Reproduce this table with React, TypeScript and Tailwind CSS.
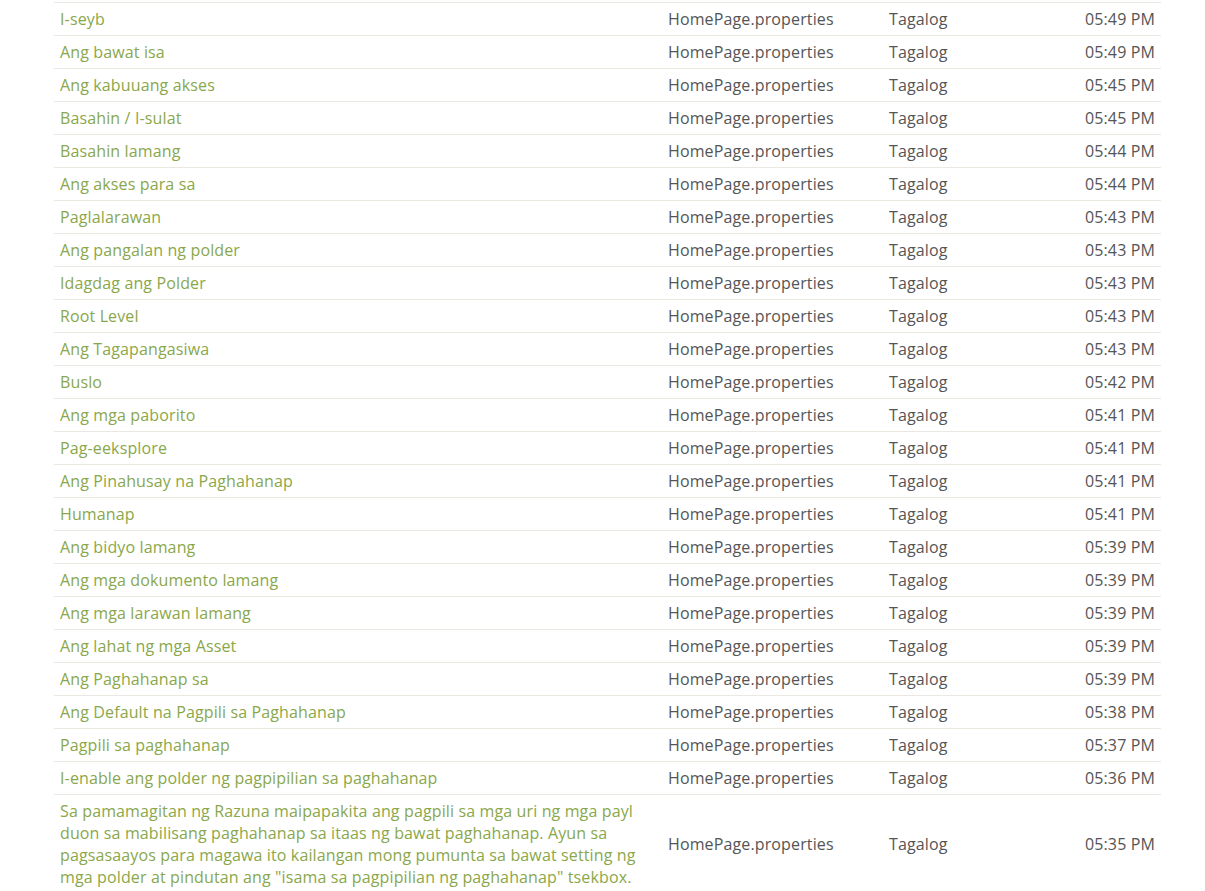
const rows: [string, string][] = [
  ["I-seyb", "05:49 PM"],
  ["Ang bawat isa", "05:49 PM"],
  ["Ang kabuuang akses", "05:45 PM"],
  ["Basahin / I-sulat", "05:45 PM"],
  ["Basahin lamang", "05:44 PM"],
  ["Ang akses para sa", "05:44 PM"],
  ["Paglalarawan", "05:43 PM"],
  ["Ang pangalan ng polder", "05:43 PM"],
  ["Idagdag ang Polder", "05:43 PM"],
  ["Root Level", "05:43 PM"],
  ["Ang Tagapangasiwa", "05:43 PM"],
  ["Buslo", "05:42 PM"],
  ["Ang mga paborito", "05:41 PM"],
  ["Pag-eeksplore", "05:41 PM"],
  ["Ang Pinahusay na Paghahanap", "05:41 PM"],
  ["Humanap", "05:41 PM"],
  ["Ang bidyo lamang", "05:39 PM"],
  ["Ang mga dokumento lamang", "05:39 PM"],
  ["Ang mga larawan lamang", "05:39 PM"],
  ["Ang lahat ng mga Asset", "05:39 PM"],
  ["Ang Paghahanap sa", "05:39 PM"],
  ["Ang Default na Pagpili sa Paghahanap", "05:38 PM"],
  ["Pagpili sa paghahanap", "05:37 PM"],
  ["I-enable ang polder ng pagpipilian sa paghahanap", "05:36 PM"],
  [
    'Sa pamamagitan ng Razuna maipapakita ang pagpili sa mga uri ng mga payl duon sa mabilisang paghahanap sa itaas ng bawat paghahanap. Ayun sa pagsasaayos para magawa ito kailangan mong pumunta sa bawat setting ng mga polder at pindutan ang "isama sa pagpipilian ng paghahanap" tsekbox.',
    "05:35 PM",
  ],
];

const App = () => {
  return (
    <div className="min-h-[891px] bg-white pt-[2px] font-['Open_Sans',sans-serif] text-[16px] leading-[22px] tracking-[0.13px] text-[#555555]">
      <table className="ml-[54px] w-[1107px] border-collapse table-fixed">
        <colgroup>
          <col className="w-[609px]" />
          <col className="w-[221px]" />
          <col className="w-[150px]" />
          <col />
        </colgroup>
        <tbody>
          {rows.map(([label, time], i) => (
            <tr key={i} className="border-t border-[#e9e9e2]">
              <td className="px-[6px] py-[5px] align-middle text-[#8aa74b]">
                {label}
              </td>
              <td className="px-[5px] py-[5px] align-middle">HomePage.properties</td>
              <td className="px-[5px] py-[5px] align-middle">Tagalog</td>
              <td className="px-[6px] py-[5px] text-right align-middle">{time}</td>
            </tr>
          ))}
        </tbody>
      </table>
    </div>
  );
};

export default App;
